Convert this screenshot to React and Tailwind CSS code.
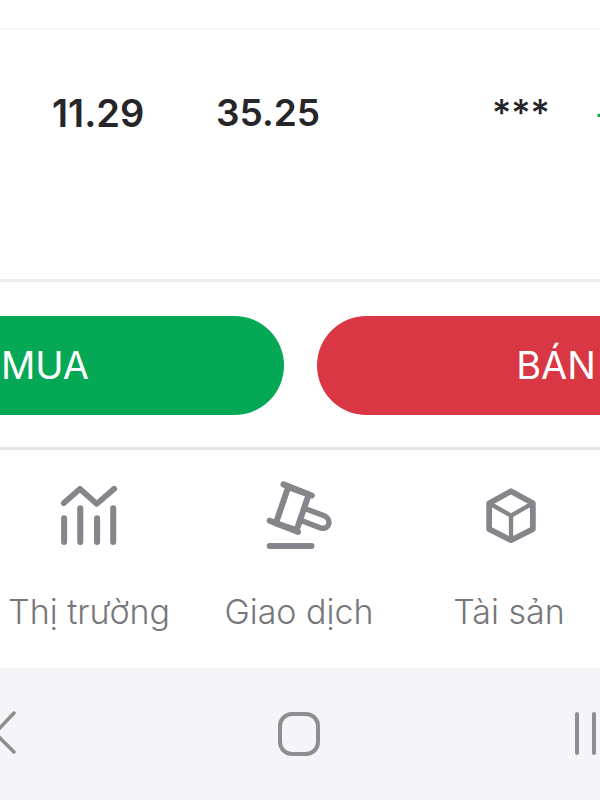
import React from 'react';

const NavItem = ({ label, viewBox, children }) => (
    <div className="w-[210px] shrink-0 flex flex-col items-center">
        <svg width="74" height="74" viewBox={viewBox} fill="none" stroke="#85858b" strokeLinecap="round" strokeLinejoin="round">
            {children}
        </svg>
        <span className="mt-[41px] text-[34px] leading-[40px] font-light text-[#77777b] whitespace-nowrap">{label}</span>
    </div>
);

export default function App() {
    return (
        <div className="w-[600px] h-[800px] overflow-hidden bg-white flex flex-col font-['Inter','Noto_Sans',sans-serif]">
            {/* top strip */}
            <div className="h-[30px] shrink-0 border-b-2 border-[#f6f6f6]" />

            {/* quote row */}
            <div className="h-[252px] shrink-0 border-b-[3px] border-[#ececec] pl-[52px] pt-[60px] flex items-start whitespace-nowrap">
                <span className="text-[38px] leading-[46px] font-semibold text-[#26262a] w-[164px] shrink-0">11.29</span>
                <span className="text-[37px] leading-[46px] font-semibold text-[#26262a] w-[276px] shrink-0">35.25</span>
                <span className="text-[37px] leading-[46px] font-medium text-[#26262a] w-[102px] shrink-0">***</span>
                <span className="text-[37px] leading-[46px] font-medium text-[#0aa858] shrink-0">+</span>
            </div>

            {/* buy / sell */}
            <div className="h-[168px] shrink-0 border-b-[3px] border-[#e6e6e6] pt-[34px] ml-[-194px] flex gap-[33px] w-[989px]">
                <div className="w-[478px] h-[99px] shrink-0 rounded-[50px] bg-[#05a854] text-white text-[38px] flex items-center justify-center">MUA</div>
                <div className="w-[478px] h-[99px] shrink-0 rounded-[50px] bg-[#d83743] text-white text-[38px] flex items-center justify-center">BÁN</div>
            </div>

            {/* bottom tabs */}
            <div className="h-[218px] shrink-0 pt-[27px] ml-[-16px] flex">
                <NavItem label="Thị trường" viewBox="157 50 220 220">
                    <path d="M192 128 L240 85 L290 130 L342 85" strokeWidth="17" />
                    <path d="M193 173 V243 M241 143 V243 M291 173 V243 M339 143 V243" strokeWidth="18" />
                </NavItem>
                <NavItem label="Giao dịch" viewBox="187 50 220 220">
                    <path d="M251 72 L335 105 M210 180 L294 213" strokeWidth="18" />
                    <path d="M265 80 L228 188 L290 208 L326 102 Z" strokeWidth="18" />
                    <path d="M318 145 L372 165 C392 174 392 206 362 202 L300 178" strokeWidth="16" />
                    <path d="M210 255 H334" strokeWidth="18" />
                </NavItem>
                <NavItem label="Tài sản" viewBox="219 50 220 220">
                    <path d="M335 92 L400 128 V205 L335 238 L270 205 V128 Z" strokeWidth="17" />
                    <path d="M270 128 L335 165 L400 128 M335 165 V238" strokeWidth="13" />
                </NavItem>
            </div>

            {/* android nav */}
            <div className="h-[132px] shrink-0 bg-[#f5f5f8] flex items-start pt-[42px] pl-0">
                <svg width="16" height="48" viewBox="0 0 16 48" fill="none" stroke="#8e8e90" strokeWidth="3.5" strokeLinecap="round" strokeLinejoin="round" className="shrink-0">
                    <path d="M14 3 L-5 23 L14 42" />
                </svg>
                <div className="ml-[262px] w-[42px] h-[44px] shrink-0 rounded-[14px] border-[4px] border-[#8e8e90] mt-[2px]" />
                <div className="ml-[255px] w-[4px] h-[43px] shrink-0 rounded-full bg-[#8e8e90] mt-[2px]" />
                <div className="ml-[13px] w-[4px] h-[43px] shrink-0 rounded-full bg-[#8e8e90] mt-[2px]" />
            </div>
        </div>
    );
}
